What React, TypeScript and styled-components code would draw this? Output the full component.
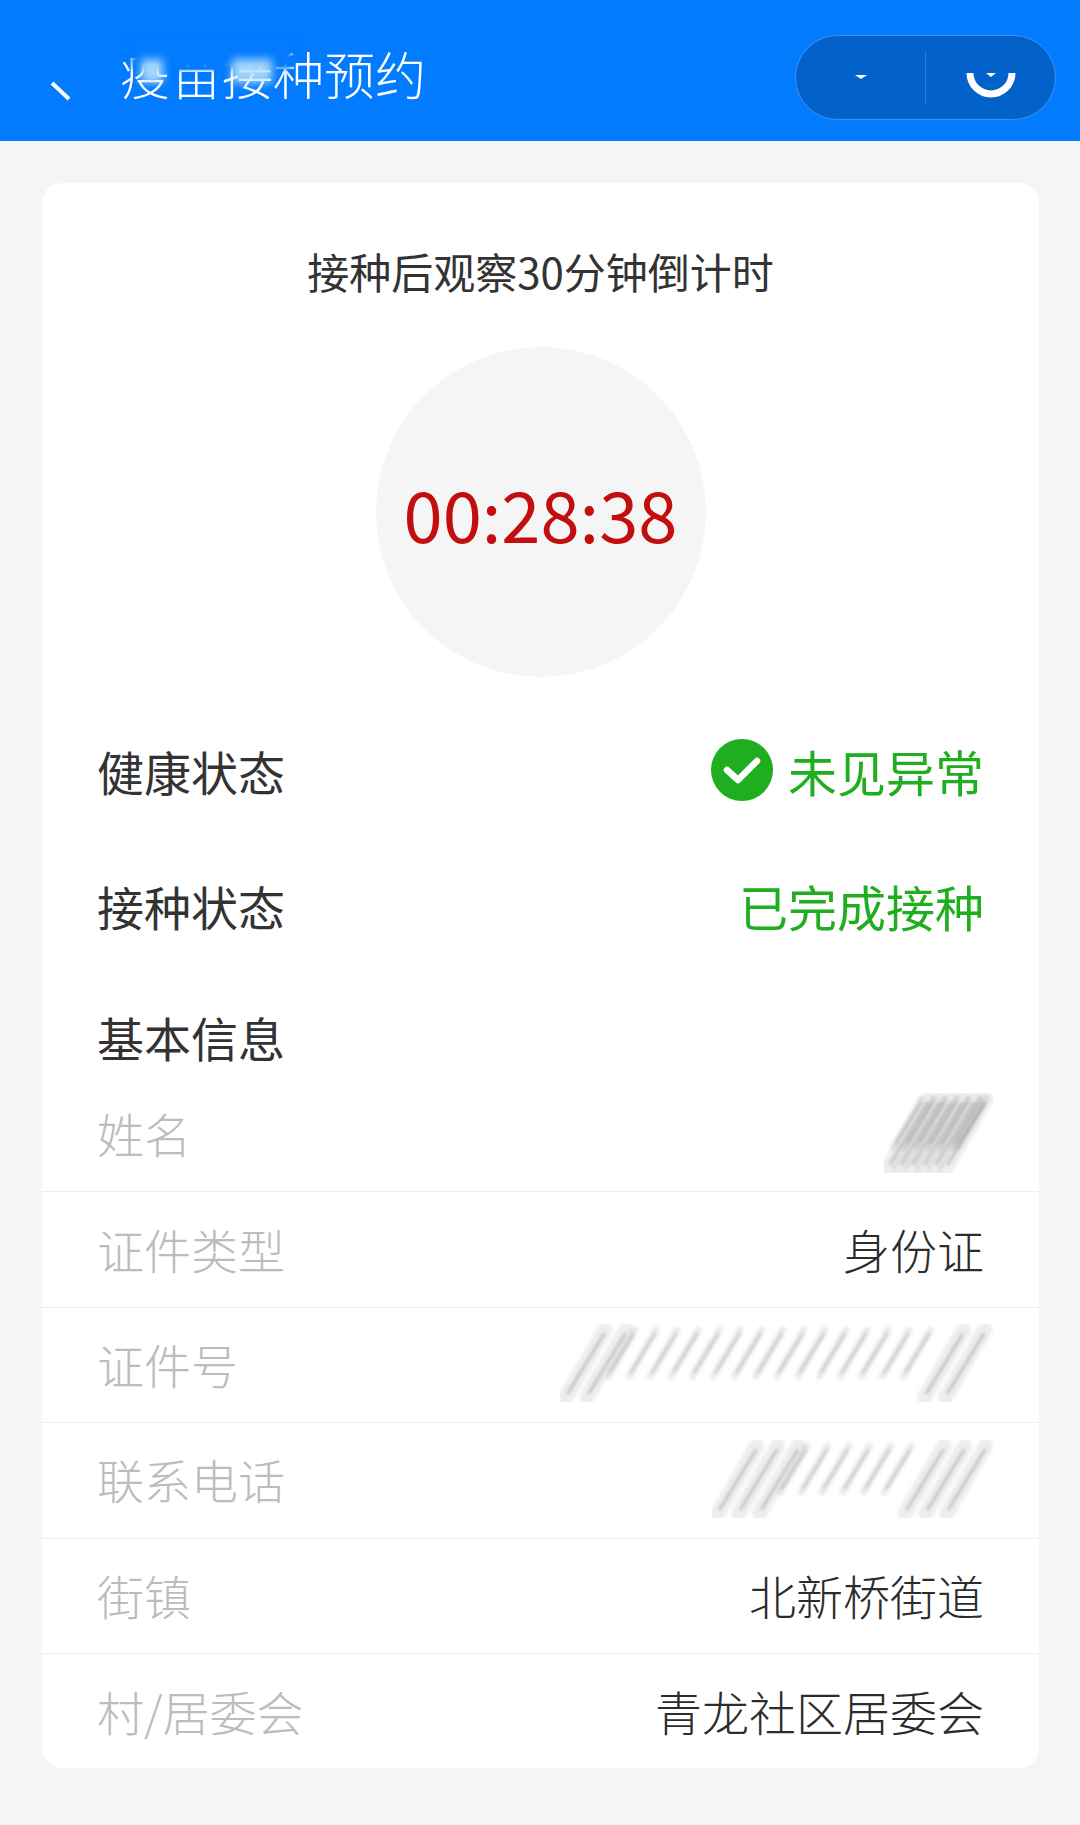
import React from "react";
import styled, { createGlobalStyle } from "styled-components";

const GlobalStyle = createGlobalStyle`
  html, body {
    margin: 0;
    padding: 0;
    background: #f5f5f5;
    font-family: "Noto Sans CJK SC", "Noto Sans", sans-serif;
  }
`;

const Page = styled.div`
  width: 1080px;
  height: 1825px;
  overflow: hidden;
  background: #f5f5f5;
`;

const Header = styled.header`
  height: 141px;
  box-sizing: border-box;
  padding: 0 24px 0 48px;
  background: #027bfe;
  display: flex;
  align-items: center;
`;

const BackMark = styled.svg`
  width: 26px;
  height: 26px;
  margin: 40px 46px 0 0;
  flex-shrink: 0;
`;

const TitleWrap = styled.div`
  position: relative;
  flex: 1;
  padding-top: 4px;
`;

const Title = styled.h1`
  margin: 0;
  font-size: 51px;
  line-height: 60px;
  font-weight: 300;
  color: #fff;
`;

const TitleSmudge = styled.div`
  position: absolute;
  left: 12px;
  top: 0;
  width: 160px;
  height: 30px;
  background: #027bfe;
  filter: blur(3px);
`;

const TitleGlow = styled.div<{ $left: number; $width: number }>`
  position: absolute;
  left: ${(p) => p.$left}px;
  top: 20px;
  width: ${(p) => p.$width}px;
  height: 24px;
  background: rgba(190, 230, 250, 0.85);
  filter: blur(4px);
`;

const Capsule = styled.div`
  width: 261px;
  height: 85px;
  box-sizing: border-box;
  margin-top: 13px;
  border: 1px solid #3e91f2;
  border-radius: 43px;
  background: #0262c9;
  display: flex;
  align-items: center;
`;

const CapsuleSlot = styled.div`
  flex: 1;
  height: 100%;
  display: flex;
  align-items: center;
  justify-content: center;
`;

const CapsuleLine = styled.div`
  width: 1px;
  height: 52px;
  background: #2a7fdf;
`;

const Main = styled.main`
  padding: 42px 41px 0 42px;
`;

const Card = styled.section`
  height: 1585px;
  box-sizing: border-box;
  padding-top: 58px;
  background: #fff;
  border-radius: 20px;
  overflow: hidden;
`;

const CountdownTitle = styled.div`
  text-align: center;
  font-size: 42px;
  line-height: 60px;
  color: #333;
`;

const Circle = styled.div`
  width: 330px;
  height: 330px;
  margin: 46px auto 29px;
  border-radius: 50%;
  background: #f5f5f5;
  display: flex;
  align-items: center;
  justify-content: center;
`;

const Timer = styled.div`
  font-size: 70.5px;
  line-height: 1;
  color: #c20e0e;
`;

const StatusRow = styled.div`
  height: 135px;
  box-sizing: border-box;
  padding: 0 55px 7px;
  display: flex;
  align-items: center;
  justify-content: space-between;
`;

const StatusLabel = styled.div`
  font-size: 47px;
  color: #333;
`;

const StatusValue = styled.div`
  display: flex;
  align-items: center;
  gap: 15px;
  font-size: 49px;
  color: #1fae1f;
`;

const SectionTitle = styled.div`
  height: 101px;
  box-sizing: border-box;
  padding: 26px 55px 0;
  font-size: 47px;
  line-height: 70px;
  color: #333;
`;

const InfoRow = styled.div<{ $last?: boolean }>`
  height: 115.4px;
  box-sizing: border-box;
  padding: 0 55px 3px;
  display: flex;
  align-items: center;
  justify-content: space-between;
  border-bottom: ${(p) => (p.$last ? "none" : "1.5px solid #eeeeee")};
`;

const InfoLabel = styled.div`
  font-size: 47px;
  font-weight: 300;
  color: #bcbcbc;
`;

const InfoValue = styled.div`
  font-size: 47px;
  font-weight: 300;
  color: #2c2c2c;
`;

const MaskSvg = styled.svg`
  flex-shrink: 0;
  margin-right: -10px;
`;

const CheckIcon = () => (
  <svg width="62" height="62" viewBox="0 0 62 62">
    <circle cx="31" cy="31" r="31" fill="#1fae1f" />
    <path
      d="M16 31l11 10 19-19"
      fill="none"
      stroke="#fff"
      strokeWidth="6.5"
      strokeLinecap="round"
      strokeLinejoin="round"
    />
  </svg>
);

// scribbled-out text: slanted grey strokes, blurred. Wide pale band with a darker core.
type Stroke = { x: number; heavy: boolean };

const makeStrokes = (count: number, step: number, heavy: number[], start = 0): Stroke[] =>
  Array.from({ length: count }, (_, i) => ({
    x: start + i * step,
    heavy: heavy.includes(i),
  }));

const SLOPE = 0.58;

const Mask: React.FC<{ id: string; width: number; height: number; strokes: Stroke[] }> = ({
  id,
  width,
  height,
  strokes,
}) => (
  <MaskSvg width={width} height={height} viewBox={`0 0 ${width} ${height}`}>
    <defs>
      <filter id={id} x="-10%" y="-10%" width="120%" height="120%">
        <feGaussianBlur stdDeviation="1.8" />
      </filter>
    </defs>
    <g filter={`url(#${id})`} stroke="#777" strokeLinecap="round">
      {strokes.map((s, i) => {
        const top = 6;
        const bottom = s.heavy ? height - 5 : height - 26;
        const x2 = s.x + (bottom - top) * SLOPE;
        return (
          <g key={i}>
            <line
              x1={s.x}
              y1={bottom}
              x2={x2}
              y2={top}
              strokeWidth={s.heavy ? 15 : 7}
              strokeOpacity={s.heavy ? 0.13 : 0.15}
            />
            <line
              x1={s.x + 2}
              y1={bottom - 4}
              x2={x2 - 1}
              y2={top + 4}
              strokeWidth={2.5}
              strokeOpacity={s.heavy ? 0.4 : 0.28}
            />
          </g>
        );
      })}
    </g>
  </MaskSvg>
);

const App: React.FC = () => {
  return (
    <Page>
      <GlobalStyle />
      <Header>
        <BackMark viewBox="0 0 26 26">
          <path d="M4 5l17 16" stroke="#fff" strokeWidth="4" fill="none" />
        </BackMark>
        <TitleWrap>
          <Title>疫苗接种预约</Title>
          <TitleSmudge />
          <TitleGlow $left={21} $width={22} />
          <TitleGlow $left={112} $width={40} />
        </TitleWrap>
        <Capsule>
          <CapsuleSlot>
            <svg width="20" height="10" viewBox="0 0 20 10">
              <path d="M4 3h12l-6 4z" fill="#fff" />
            </svg>
          </CapsuleSlot>
          <CapsuleLine />
          <CapsuleSlot>
            <svg width="52" height="44" viewBox="0 0 52 44">
              <path
                d="M5 18a21 21 0 0 0 42 0"
                fill="none"
                stroke="#fff"
                strokeWidth="7"
              />
              <path d="M21 18h10l-5 4z" fill="#fff" />
            </svg>
          </CapsuleSlot>
        </Capsule>
      </Header>
      <Main>
        <Card>
          <CountdownTitle>接种后观察30分钟倒计时</CountdownTitle>
          <Circle>
            <Timer>00:28:38</Timer>
          </Circle>
          <StatusRow>
            <StatusLabel>健康状态</StatusLabel>
            <StatusValue>
              <CheckIcon />
              未见异常
            </StatusValue>
          </StatusRow>
          <StatusRow>
            <StatusLabel>接种状态</StatusLabel>
            <StatusValue>已完成接种</StatusValue>
          </StatusRow>
          <SectionTitle>基本信息</SectionTitle>
          <InfoRow>
            <InfoLabel>姓名</InfoLabel>
            <Mask id="m1" width={110} height={80} strokes={makeStrokes(13, 5.8, [0, 2, 4, 6, 8, 10], 4)} />
          </InfoRow>
          <InfoRow>
            <InfoLabel>证件类型</InfoLabel>
            <InfoValue>身份证</InfoValue>
          </InfoRow>
          <InfoRow>
            <InfoLabel>证件号</InfoLabel>
            <Mask id="m2" width={434} height={78} strokes={makeStrokes(19, 21.1, [0, 1, 17, 18], 6)} />
          </InfoRow>
          <InfoRow>
            <InfoLabel>联系电话</InfoLabel>
            <Mask id="m3" width={282} height={78} strokes={makeStrokes(12, 20.8, [0, 1, 2, 9, 10, 11], 6)} />
          </InfoRow>
          <InfoRow>
            <InfoLabel>街镇</InfoLabel>
            <InfoValue>北新桥街道</InfoValue>
          </InfoRow>
          <InfoRow $last>
            <InfoLabel>村/居委会</InfoLabel>
            <InfoValue>青龙社区居委会</InfoValue>
          </InfoRow>
        </Card>
      </Main>
    </Page>
  );
};

export default App;
